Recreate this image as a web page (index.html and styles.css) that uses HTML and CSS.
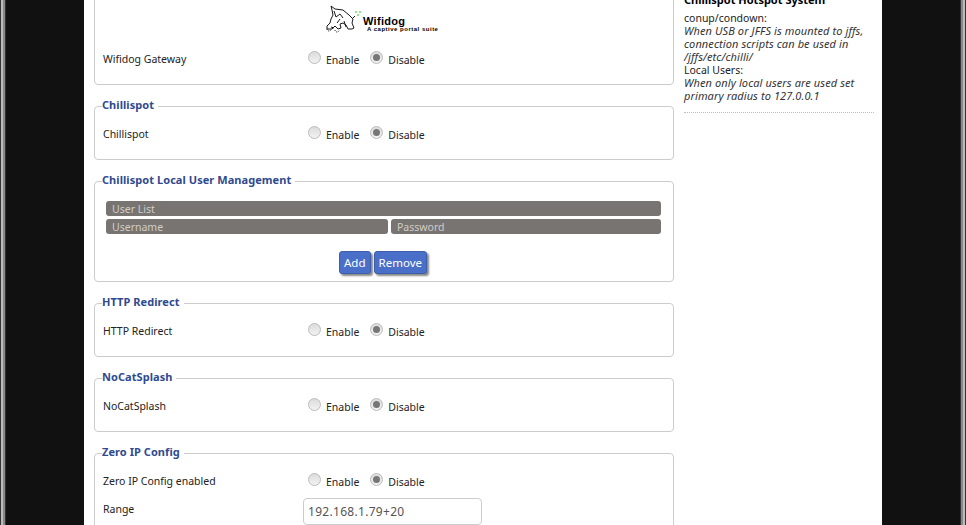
FILE: index.html
```html
<!DOCTYPE html>
<html lang="en">
<head>
<meta charset="utf-8">
<title>Hotspot</title>
<link rel="stylesheet" href="styles.css">
</head>
<body>
<div class="wrapper">
  <main class="main">
    <fieldset class="group first">
      <div class="logo">
        <svg class="cat" width="38" height="28" viewBox="0 0 38 28" aria-hidden="true">
          <g fill="none" stroke="#1a1a1a" stroke-width="1">
            <path d="M6 1l4 3 8 1 6 5 4 4-1 4 2 5-2 1-4 0-2-4-3-2-3 1 1 4-3 1-3-3-3 3-5 0 0-3 3-3 1-4 2-4-1-5z"/>
            <path d="M9 6l2 6 4-3 3 4M15 14l-3 4M6 22l3 1M19 16l2 6"/>
            <path d="M2 24a2 2 0 1 0 4 0M10 25a2 2 0 1 0 4 0" stroke-dasharray="1 1"/>
            <path d="M27 14l3-3"/>
          </g>
          <path d="M31 6v2M35 6v2M32 10h2" stroke="#22cc22" fill="none"/>
        </svg>
        <span class="logo-text"><b class="logo-name">Wifidog</b><b class="logo-sub">A captive portal suite</b></span>
      </div>
      <div class="row">
        <span class="label">Wifidog Gateway</span>
        <span class="radios"><label class="radio"><i class="dot"></i>Enable</label><label class="radio"><i class="dot on"></i>Disable</label></span>
      </div>
    </fieldset>

    <fieldset class="group">
      <legend>Chillispot</legend>
      <div class="row">
        <span class="label">Chillispot</span>
        <span class="radios"><label class="radio"><i class="dot"></i>Enable</label><label class="radio"><i class="dot on"></i>Disable</label></span>
      </div>
    </fieldset>

    <fieldset class="group users">
      <legend>Chillispot Local User Management</legend>
      <div class="table">
        <div class="th full">User List</div>
        <div class="th">Username</div>
        <div class="th">Password</div>
      </div>
      <div class="buttons"><button class="btn">Add</button><button class="btn">Remove</button></div>
    </fieldset>

    <fieldset class="group">
      <legend>HTTP Redirect</legend>
      <div class="row">
        <span class="label">HTTP Redirect</span>
        <span class="radios"><label class="radio"><i class="dot"></i>Enable</label><label class="radio"><i class="dot on"></i>Disable</label></span>
      </div>
    </fieldset>

    <fieldset class="group">
      <legend>NoCatSplash</legend>
      <div class="row">
        <span class="label">NoCatSplash</span>
        <span class="radios"><label class="radio"><i class="dot"></i>Enable</label><label class="radio"><i class="dot on"></i>Disable</label></span>
      </div>
    </fieldset>

    <fieldset class="group last">
      <legend>Zero IP Config</legend>
      <div class="row">
        <span class="label">Zero IP Config enabled</span>
        <span class="radios"><label class="radio"><i class="dot"></i>Enable</label><label class="radio"><i class="dot on"></i>Disable</label></span>
      </div>
      <div class="row range">
        <span class="label">Range</span>
        <span class="field">192.168.1.79+20</span>
      </div>
    </fieldset>
  </main>
  <aside class="help">
    <h2>Chillispot Hotspot System</h2>
    <p>conup/condown:<br><em>When USB or JFFS is mounted to jffs, connection scripts can be used in /jffs/etc/chilli/</em><br>Local Users:<br><em>When only local users are used set primary radius to 127.0.0.1</em></p>
  </aside>
</div>
</body>
</html>
```
FILE: styles.css
```css
* { box-sizing: border-box; }
html, body { height: 100%; margin: 0; overflow: hidden; }
body {
  background:
    linear-gradient(90deg, #333 0 1px, #bbb 1px 3px, #888 3px 5px, #333 5px 6px, #111 6px) left / 6px 100% no-repeat,
    linear-gradient(90deg, #333 0 1px, #888 1px 3px, #bbb 3px 5px, #333 5px 6px) right / 6px 100% no-repeat,
    #111;
  font-family: "Noto Sans", sans-serif;
  font-size: 10.5px;
  color: #222;
}
.wrapper {
  margin-left: 84px;
  width: 798px;
  height: 525px;
  background: #fff;
  padding: 0 8px 0 10px;
  display: flex;
  gap: 10px;
  overflow: hidden;
}
.main { width: 580px; flex: none; }
.help {
  width: 190px;
  flex: none;
  height: 118px;
  margin-top: -5px;
  border-bottom: 1px dotted #bbb;
  color: #222;
  line-height: 13px;
}
.help h2 { margin: -2px 0 6px; font-size: 11px; line-height: 13px; color: #000; font-weight: bold; }
.help p { margin: 0; }
.help em { color: #333; font-size: 11px; line-height: 10px; letter-spacing: 0.1px; }
.group {
  margin: 0 0 13px;
  padding: 0 8px;
  min-width: 0;
  border: 1px solid #ccc;
  border-radius: 4px;
  height: 62px;
}
.group legend {
  padding: 0 4px 2px 0;
  margin-left: -1px;
  font-weight: bold;
  font-size: 11px;
  letter-spacing: 0.06px;
  line-height: 14px;
  color: #2f4a8f;
}
.first { height: 102px; margin-top: -17px; }
.users { height: 109px; }
.last { height: 121px; }
.logo { display: flex; height: 63px; padding: 21px 0 0 222px; }
.cat { flex: none; }
.logo-text { display: flex; flex-direction: column; font-family: "Liberation Sans", sans-serif; color: #000; padding-top: 11px; }
.logo-name { font-size: 11px; line-height: 10px; letter-spacing: 0.3px; }
.logo-sub { font-size: 6px; line-height: 6px; letter-spacing: 0.5px; padding-left: 4px; white-space: nowrap; }
.row { display: flex; align-items: center; height: 24px; margin-top: 8px; }
.first .row { margin-top: 0; }
.label { width: 200px; flex: none; }
.radios { display: flex; gap: 6px; }
.radio { display: flex; align-items: flex-start; line-height: 13px; padding-top: 3px; }
.dot {
  width: 13px;
  height: 13px;
  margin: -3px 5px 0 5px;
  border-radius: 50%;
  border: 1px solid #bbb;
  background: linear-gradient(#dcdcdc, #f2f2f2);
  position: relative;
}
.dot.on::after {
  content: "";
  position: absolute;
  inset: 2px;
  border-radius: 50%;
  background: #777;
}
.table { display: grid; grid-template-columns: 282px 270px; gap: 3px; margin: 12px 3px 0; }
.th {
  background: #777472;
  color: #d0cdc8;
  height: 15px;
  line-height: 16px;
  padding-left: 6px;
  border-radius: 3px;
}
.th.full { grid-column: 1 / -1; }
.buttons { display: flex; justify-content: center; gap: 3px; margin-top: 17px; padding-right: 2px; }
.btn {
  height: 23px;
  padding: 0 4px;
  font: 11.5px "Noto Sans", sans-serif;
  color: #fff;
  background: #4a6fc9;
  border: 1px solid #3d5ea8;
  border-radius: 3px;
  box-shadow: 2px 2px 2px #888;
}
.range { margin-top: 4px; }
.field {
  width: 179px;
  height: 27px;
  flex: none;
  align-self: flex-start;
  margin-top: 1px;
  border: 1px solid #ccc;
  border-radius: 4px;
  padding: 0 4px;
  line-height: 25px;
  font-size: 12px;
  letter-spacing: 0.3px;
  color: #555;
}
```
